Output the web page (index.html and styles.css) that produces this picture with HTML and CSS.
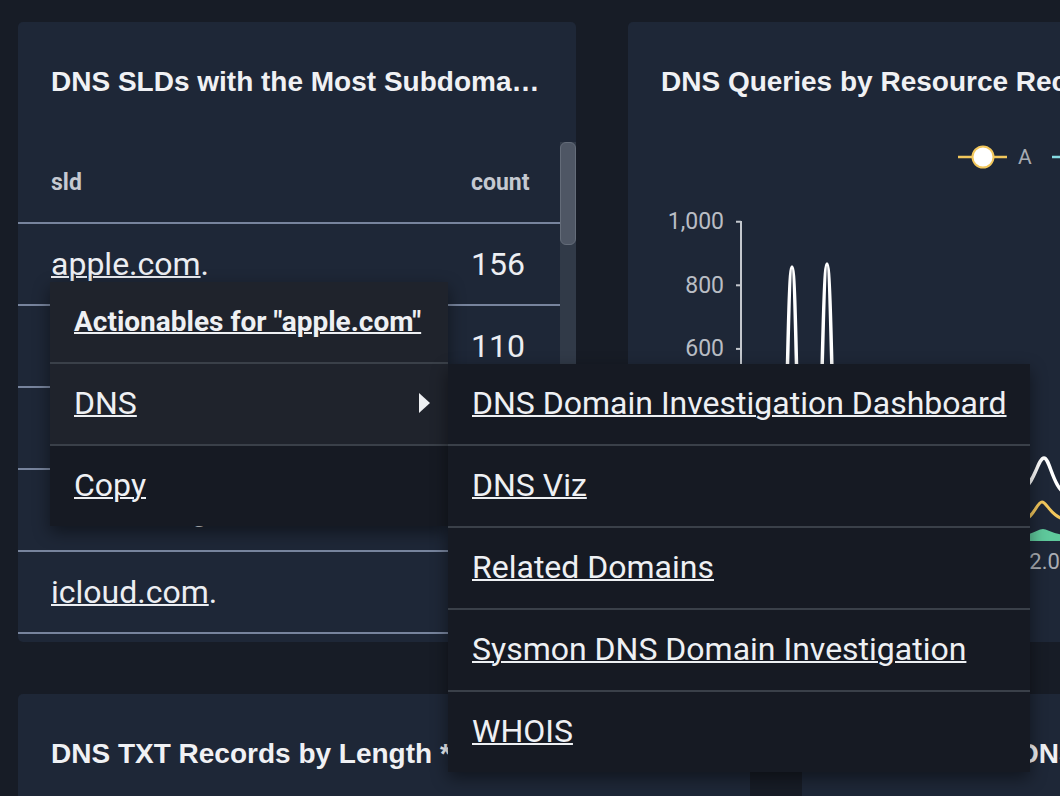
FILE: index.html
```html
<!DOCTYPE html>
<html lang="en">
<head>
<meta charset="utf-8">
<title>DNS Dashboard</title>
<link rel="stylesheet" href="styles.css">
</head>
<body>
<div class="page">
  <div class="row">
    <section class="panel panel-top">
      <h2 class="panel-title">DNS SLDs with the Most Subdomains</h2>
      <div class="table-wrap">
        <div class="table">
          <div class="tr th"><div class="td c-sld">sld</div><div class="td c-count">count</div></div>
          <div class="tr"><div class="td c-sld"><a class="dom">apple.com</a>.</div><div class="td c-count">156</div></div>
          <div class="tr"><div class="td c-sld"><a class="dom">microsoft.com</a>.</div><div class="td c-count">110</div></div>
          <div class="tr"><div class="td c-sld"><a class="dom">amazonaws.com</a>.</div><div class="td c-count">87</div></div>
          <div class="tr"><div class="td c-sld"><a class="dom">akamaiedge.net</a>.</div><div class="td c-count">64</div></div>
          <div class="tr"><div class="td c-sld"><a class="dom">icloud.com</a>.</div><div class="td c-count">52</div></div>
          <div class="tr"><div class="td c-sld"><a class="dom">windows.com</a>.</div><div class="td c-count">41</div></div>
        </div>
        <div class="scrollbar"><div class="thumb"></div></div>
      </div>
    </section>
    <section class="panel panel-top">
      <h2 class="panel-title">DNS Queries by Resource Record Type</h2>
      <div class="legend">
        <span class="lg-item">
          <svg class="lg-mark" width="49" height="24" viewBox="0 0 49 24"><line x1="0" y1="12" x2="49" y2="12" stroke="#f2c75c" stroke-width="2.5"/><circle cx="25" cy="12" r="10.5" fill="#ffffff" stroke="#f2c75c" stroke-width="2"/></svg>
          <span class="lg-label">A</span>
        </span>
        <span class="lg-item">
          <svg class="lg-mark" width="49" height="24" viewBox="0 0 49 24"><line x1="0" y1="12" x2="49" y2="12" stroke="#86dbe3" stroke-width="2.5"/><circle cx="25" cy="12" r="10.5" fill="#ffffff" stroke="#86dbe3" stroke-width="2"/></svg>
          <span class="lg-label">AAAA</span>
        </span>
      </div>
      <svg class="chart" width="558" height="400" viewBox="0 0 558 400">
        <g class="axis">
          <line x1="113" y1="31" x2="113" y2="350" />
          <line x1="108" y1="31.7" x2="113" y2="31.7" />
          <line x1="108" y1="95.3" x2="113" y2="95.3" />
          <line x1="108" y1="158.9" x2="113" y2="158.9" />
          <line x1="108" y1="222.5" x2="113" y2="222.5" />
          <line x1="108" y1="286.1" x2="113" y2="286.1" />
          <line x1="108" y1="349.7" x2="113" y2="349.7" />
        </g>
        <g class="ylabels">
          <text x="96" y="31.7">1,000</text>
          <text x="96" y="95.3">800</text>
          <text x="96" y="158.9">600</text>
          <text x="96" y="222.5">400</text>
          <text x="96" y="286.1">200</text>
          <text x="96" y="349.7">0</text>
        </g>
        <path class="series-w" d="M 140 349 L 151 348 C 159 346, 159 77, 164 77 C 169 77, 169 346, 177 348 L 186 349 C 193 348, 194 74, 199 74 C 204 74, 205 348, 212 349 L 250 349"/>
        <path class="series-w" d="M 395 298 C 406 295, 410 268, 416 268 C 422 268, 425 300, 440 305"/>
        <path class="series-y" d="M 395 330 C 405 329, 409 312, 414 312 C 419 312, 423 328, 440 330"/>
        <path class="series-g" d="M 395 350 L 395 346 C 405 346, 410 340, 415 340 C 420 340, 425 346, 440 346 L 440 350 Z"/>
        <text class="xlabel" x="389" y="371">12.00</text>
      </svg>
    </section>
  </div>
  <div class="row">
    <section class="panel panel-bottom">
      <h2 class="panel-title">DNS TXT Records by Length * Count</h2>
    </section>
    <section class="panel panel-bottom">
      <h2 class="panel-title">Frequency of DNS Errors</h2>
    </section>
  </div>

  <div class="menu">
    <div class="menu-item menu-head"><a class="mlink">Actionables for "apple.com"</a></div>
    <div class="menu-item active"><a class="mlink">DNS</a><span class="caret"></span></div>
    <div class="menu-item"><a class="mlink">Copy</a></div>
  </div>

  <div class="menu submenu">
    <div class="menu-item"><a class="mlink">DNS Domain Investigation Dashboard</a></div>
    <div class="menu-item"><a class="mlink">DNS Viz</a></div>
    <div class="menu-item"><a class="mlink">Related Domains</a></div>
    <div class="menu-item"><a class="mlink">Sysmon DNS Domain Investigation</a></div>
    <div class="menu-item"><a class="mlink">WHOIS</a></div>
  </div>
</div>
</body>
</html>
```

FILE: styles.css
```css
html, body {
  margin: 0;
  padding: 0;
}
body {
  width: 1060px;
  height: 796px;
  overflow: hidden;
  background: #171c26;
  font-family: Roboto, "Liberation Sans", sans-serif;
  color: #eceef2;
}
.page {
  position: relative;
  box-sizing: border-box;
  height: 796px;
  padding: 22px 0 0 18px;
  display: flex;
  flex-direction: column;
  gap: 52px;
}
.row {
  display: flex;
  gap: 52px;
}
.panel {
  flex-shrink: 0;
  background: #1e2737;
  border-radius: 5px;
  overflow: hidden;
}
.panel-top {
  width: 558px;
  height: 620px;
}
.panel-bottom {
  width: 732px;
  height: 220px;
}
.panel-title {
  margin: 0;
  padding: 43px 35px 0 33px;
  font: bold 28px/34px "Liberation Sans", Arial, sans-serif;
  color: #f0f1f4;
  white-space: nowrap;
  overflow: hidden;
  text-overflow: ellipsis;
}

/* table */
.table-wrap {
  margin-top: 43px;
  display: flex;
  height: 500px;
}
.table {
  width: 542px;
}
.tr {
  display: flex;
  align-items: center;
  height: 80px;
  border-bottom: 2px solid #77849d;
  font-size: 32px;
  color: #eceef2;
}
.th {
  font-size: 23px;
  font-weight: bold;
  color: #c5c9d1;
}
.c-sld {
  flex: 1;
  padding-left: 33px;
  white-space: nowrap;
}
.c-count {
  width: 89px;
}
.dom {
  color: inherit;
  text-decoration: underline;
  text-decoration-thickness: 2px;
}
.scrollbar {
  width: 16px;
  background: #313a48;
}
.thumb {
  box-sizing: border-box;
  height: 103px;
  background: #4e5664;
  border: 1px solid #646c79;
  border-radius: 6px;
}

/* legend + chart */
.legend {
  display: flex;
  align-items: center;
  gap: 20px;
  height: 24px;
  margin-top: 46px;
  padding-left: 330px;
  white-space: nowrap;
}
.lg-item {
  display: flex;
  align-items: center;
  gap: 11px;
  flex-shrink: 0;
}
.lg-mark {
  display: block;
}
.lg-label {
  font-size: 21px;
  color: #a7abb3;
}
.chart {
  display: block;
  margin-top: 21px;
}
.axis line {
  stroke: #c4c8ce;
  stroke-width: 2;
}
.ylabels text {
  font-family: Roboto, sans-serif;
  font-size: 23px;
  fill: #b9bdc4;
  text-anchor: end;
  dominant-baseline: central;
}
.series-w {
  fill: none;
  stroke: #ffffff;
  stroke-width: 3.5;
}
.series-y {
  fill: none;
  stroke: #f2c75c;
  stroke-width: 3;
}
.series-g {
  fill: #5fc99c;
  stroke: #5fc99c;
  stroke-width: 2;
}
.xlabel {
  font-family: Roboto, sans-serif;
  font-size: 22px;
  fill: #a9adb4;
  dominant-baseline: central;
}

/* context menus */
.menu {
  position: absolute;
  left: 50px;
  top: 282px;
  width: 398px;
  background: #161a23;
  box-shadow: 0 6px 16px rgba(0, 0, 0, 0.45);
}
.submenu {
  left: 448px;
  top: 364px;
  width: 582px;
}
.menu-item {
  display: flex;
  align-items: center;
  box-sizing: border-box;
  height: 82px;
  padding: 0 18px 2px 24px;
  border-top: 2px solid #3a4049;
  font-size: 32px;
  color: #eef0f3;
  white-space: nowrap;
}
.menu-item:first-child {
  height: 80px;
  border-top: none;
}
.menu-head {
  background: #1f232c;
  font-size: 28px;
  font-weight: bold;
}
.menu-item.active {
  background: #1f232c;
}
.mlink {
  color: inherit;
  text-decoration: underline;
  text-decoration-thickness: 2px;
}
.caret {
  margin-left: auto;
  width: 0;
  height: 0;
  border-left: 11px solid #eef0f3;
  border-top: 10px solid transparent;
  border-bottom: 10px solid transparent;
}
```
